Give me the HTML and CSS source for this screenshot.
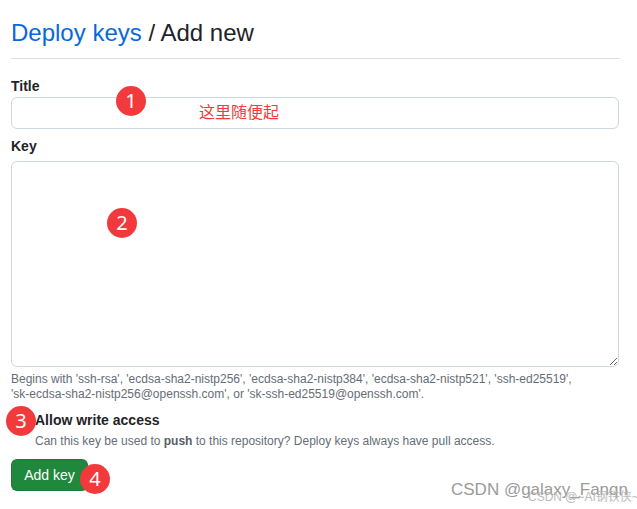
FILE: index.html
```html
<!DOCTYPE html>
<html>
<head>
<meta charset="utf-8">
<link rel="stylesheet" href="styles.css">
</head>
<body>
<div class="page">
  <div class="subhead">
    <h2 class="subhead-heading"><a class="crumb" href="#">Deploy keys</a> / Add new</h2>
  </div>
  <form class="form">
    <div class="group">
      <label class="label">Title</label>
      <input class="input" type="text">
    </div>
    <div class="group group-key">
      <label class="label label-key">Key</label>
      <textarea class="textarea"></textarea>
      <p class="note"><span class="nw">Begins with</span> <span class="nw">'ssh-rsa',</span> <span class="nw">'ecdsa-sha2-nistp256',</span> <span class="nw">'ecdsa-sha2-nistp384',</span> <span class="nw">'ecdsa-sha2-nistp521',</span> <span class="nw">'ssh-ed25519',</span> <span class="nw">'sk-ecdsa-sha2-nistp256@openssh.com',</span> or <span class="nw">'sk-ssh-ed25519@openssh.com'.</span></p>
    </div>
    <div class="check">
      <div class="check-title">Allow write access</div>
      <div class="check-note">Can this key be used to <strong>push</strong> to this repository? Deploy keys always have pull access.</div>
    </div>
    <button class="btn" type="button">Add key</button>
  </form>

  <span class="badge b1">1</span>
  <span class="hint">这里随便起</span>
  <span class="badge b2">2</span>
  <span class="badge b3">3</span>
  <span class="badge b4">4</span>
  <span class="wm1">CSDN @galaxy_Fanqn</span>
  <span class="wm2">CSDN @~AI钢铁侠~</span>
</div>
</body>
</html>
```
FILE: styles.css
```css
* { box-sizing: border-box; }
html, body { margin: 0; padding: 0; background: #fff; }
body {
  font-family: "Liberation Sans", Arial, sans-serif;
  color: #1f2328;
  width: 637px;
  height: 509px;
  overflow: hidden;
}
.page {
  position: relative;
  padding: 18px 18px 0 11px;
  height: 509px;
}
.subhead {
  border-bottom: 1px solid #d8dee4;
  padding-bottom: 10px;
}
.subhead-heading {
  margin: 0;
  font-size: 24px;
  font-weight: 400;
  line-height: 30px;
  color: #1f2328;
}
.crumb { color: #0969da; text-decoration: none; }
.form { display: flex; flex-direction: column; }
.group { margin-top: 17px; display: flex; flex-direction: column; }
.group-key { margin-top: 7px; }
.label {
  font-size: 14px;
  font-weight: 700;
  line-height: 21px;
}
.label-key { margin-bottom: 4px; }
.input {
  height: 32px;
  border: 1px solid #d0d7de;
  border-radius: 6px;
  background: #fff;
  font: inherit;
  margin: 0;
}
.textarea {
  height: 206px;
  border: 1px solid #d0d7de;
  border-radius: 6px;
  background: #fff;
  margin: 0;
  resize: vertical;
  font: inherit;
}
.note {
  margin: 5px 0 0;
  font-size: 12px;
  line-height: 15px;
  color: #656d76;
}
.nw { white-space: nowrap; }
.check { padding-left: 24px; margin-top: 8px; }
.check-title {
  font-size: 14px;
  font-weight: 700;
  line-height: 20px;
}
.check-note {
  font-size: 12px;
  line-height: 18px;
  color: #656d76;
  margin-top: 2px;
}
.check-note strong { color: #57606a; }
.btn {
  align-self: flex-start;
  margin-top: 9px;
  height: 32px;
  width: 77px;
  padding: 0;
  border: 1px solid rgba(31, 35, 40, 0.15);
  border-radius: 6px;
  background: #1f883d;
  color: #fff;
  font-family: "Liberation Sans", Arial, sans-serif;
  font-size: 14px;
  font-weight: 400;
}
.badge {
  position: absolute;
  width: 30px;
  height: 30px;
  border-radius: 50%;
  background: #f23a3c;
  color: #fff;
  font-family: "Noto Sans", sans-serif;
  font-size: 20px;
  line-height: 30px;
  text-align: center;
  font-weight: 400;
}
.b1 { left: 116px; top: 86px; }
.b2 { left: 107px; top: 208px; }
.b3 { left: 6px; top: 406px; }
.b4 { left: 80px; top: 464px; }
.hint {
  position: absolute;
  left: 199px;
  top: 101px;
  font-family: "Noto Sans CJK SC", sans-serif;
  font-size: 16px;
  line-height: 20px;
  color: #f23a3c;
}
.wm1 {
  position: absolute;
  left: 451px;
  top: 480px;
  font-family: "Liberation Sans", Arial, sans-serif;
  font-size: 17px;
  line-height: 20px;
  color: #8a8a8a;
  opacity: 0.85;
  white-space: nowrap;
}
.wm2 {
  position: absolute;
  left: 528px;
  top: 490px;
  font-family: "Liberation Sans", "Noto Sans CJK SC", sans-serif;
  font-size: 12px;
  line-height: 14px;
  color: #b4b4b4;
  opacity: 0.9;
  white-space: nowrap;
}
```
